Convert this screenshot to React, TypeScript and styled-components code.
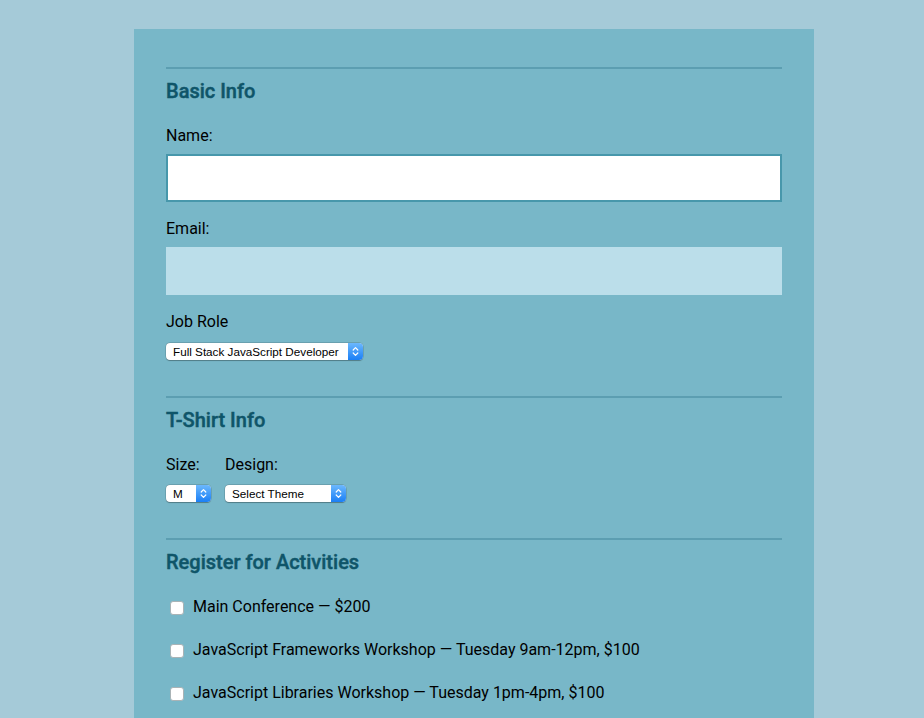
import React from "react";
import styled, { createGlobalStyle } from "styled-components";

const GlobalStyle = createGlobalStyle`
  html, body {
    margin: 0;
    padding: 0;
    background: #a5cad8;
  }
  body {
    font-family: Roboto, "Liberation Sans", sans-serif;
    color: #000;
  }
`;

const Page = styled.div`
  padding: 29px 0 0 24px;
  min-height: 718px;
  box-sizing: border-box;
`;

const Form = styled.form`
  width: 680px;
  margin: 0 auto;
  padding: 38px 32px 40px;
  box-sizing: border-box;
  background: #78b7c8;
`;

const Fieldset = styled.fieldset`
  margin: 0;
  padding: 0;
  border: none;
  border-top: 2px solid #5c9eb1;
  padding-top: 10px;
  padding-bottom: 36px;
  min-width: 0;
`;

const Legend = styled.h2`
  margin: 0 0 23px;
  font-size: 20px;
  line-height: 24px;
  font-weight: 500;
  color: #0f5569;
  -webkit-text-stroke: 0.45px #0f5569;
`;

const Label = styled.label<{ $gap?: number }>`
  display: block;
  font-size: 16px;
  line-height: 20px;
  margin-bottom: ${(p) => p.$gap ?? 8}px;
`;

const TextInput = styled.input<{ $focused?: boolean }>`
  display: block;
  width: 100%;
  height: 48px;
  box-sizing: border-box;
  margin: 0 0 17px;
  padding: 0 12px;
  font-family: inherit;
  font-size: 16px;
  border: 2px solid ${(p) => (p.$focused ? "#4797ab" : "#bbdeea")};
  background: ${(p) => (p.$focused ? "#ffffff" : "#bbdeea")};
  outline: none;
  border-radius: 0;
`;

const SelectWrap = styled.div<{ $width: number }>`
  position: relative;
  width: ${(p) => p.$width}px;
  height: 17px;
`;

const NativeSelect = styled.select`
  appearance: none;
  -webkit-appearance: none;
  display: block;
  width: 100%;
  height: 17px;
  margin: 0;
  padding: 0 18px 0 7px;
  border: none;
  border-radius: 4px;
  background: #fff;
  box-shadow: 0 0 0 0.5px rgba(0, 0, 0, 0.2), 0 0.5px 1px rgba(0, 0, 0, 0.25);
  font-family: "Liberation Sans", Arial, sans-serif;
  font-size: 11.7px;
  line-height: 17px;
  color: #000;
  outline: none;
`;

const Stepper = styled.span`
  position: absolute;
  top: 0;
  right: 0;
  width: 15px;
  height: 17px;
  border-radius: 0 4px 4px 0;
  background: linear-gradient(#6cb8fd, #1a7ff6);
  display: flex;
  align-items: center;
  justify-content: center;
  pointer-events: none;
`;

const Select: React.FC<{ width: number; options: string[] }> = ({ width, options }) => (
  <SelectWrap $width={width}>
    <NativeSelect defaultValue={options[0]}>
      {options.map((o) => (
        <option key={o}>{o}</option>
      ))}
    </NativeSelect>
    <Stepper>
      <svg width="7" height="11" viewBox="0 0 7 11" fill="none">
        <path d="M1.2 4 L3.5 1.7 L5.8 4" stroke="#fff" strokeWidth="1.2" strokeLinecap="round" strokeLinejoin="round" />
        <path d="M1.2 7 L3.5 9.3 L5.8 7" stroke="#fff" strokeWidth="1.2" strokeLinecap="round" strokeLinejoin="round" />
      </svg>
    </Stepper>
  </SelectWrap>
);

const ShirtRow = styled.div`
  display: flex;
  gap: 14px;
`;

const ShirtGroup = styled.div`
  display: flex;
  flex-direction: column;
`;

const ActivityList = styled.div`
  display: flex;
  flex-direction: column;
  gap: 23px;
`;

const Activity = styled.label`
  display: flex;
  align-items: center;
  gap: 9px;
  padding-left: 4px;
  font-size: 16px;
  line-height: 20px;
`;

const Checkbox = styled.input`
  appearance: none;
  -webkit-appearance: none;
  width: 14px;
  height: 14px;
  margin: 1px 0 0;
  box-sizing: border-box;
  border: 1px solid #a9b3b6;
  border-radius: 3px;
  background: #fff;
`;

const activities = [
  "Main Conference — $200",
  "JavaScript Frameworks Workshop — Tuesday 9am-12pm, $100",
  "JavaScript Libraries Workshop — Tuesday 1pm-4pm, $100",
];

export default function App() {
  return (
    <>
      <GlobalStyle />
      <Page>
        <Form>
          <Fieldset>
            <Legend>Basic Info</Legend>
            <Label htmlFor="name">Name:</Label>
            <TextInput id="name" type="text" $focused />
            <Label htmlFor="mail">Email:</Label>
            <TextInput id="mail" type="email" />
            <Label $gap={11}>Job Role</Label>
            <Select width={197} options={["Full Stack JavaScript Developer"]} />
          </Fieldset>

          <Fieldset>
            <Legend>T-Shirt Info</Legend>
            <ShirtRow>
              <ShirtGroup>
                <Label $gap={10}>Size:</Label>
                <Select width={45} options={["M"]} />
              </ShirtGroup>
              <ShirtGroup>
                <Label $gap={10}>Design:</Label>
                <Select width={121} options={["Select Theme"]} />
              </ShirtGroup>
            </ShirtRow>
          </Fieldset>

          <Fieldset>
            <Legend>Register for Activities</Legend>
            <ActivityList>
              {activities.map((a) => (
                <Activity key={a}>
                  <Checkbox type="checkbox" />
                  {a}
                </Activity>
              ))}
            </ActivityList>
          </Fieldset>
        </Form>
      </Page>
    </>
  );
}
